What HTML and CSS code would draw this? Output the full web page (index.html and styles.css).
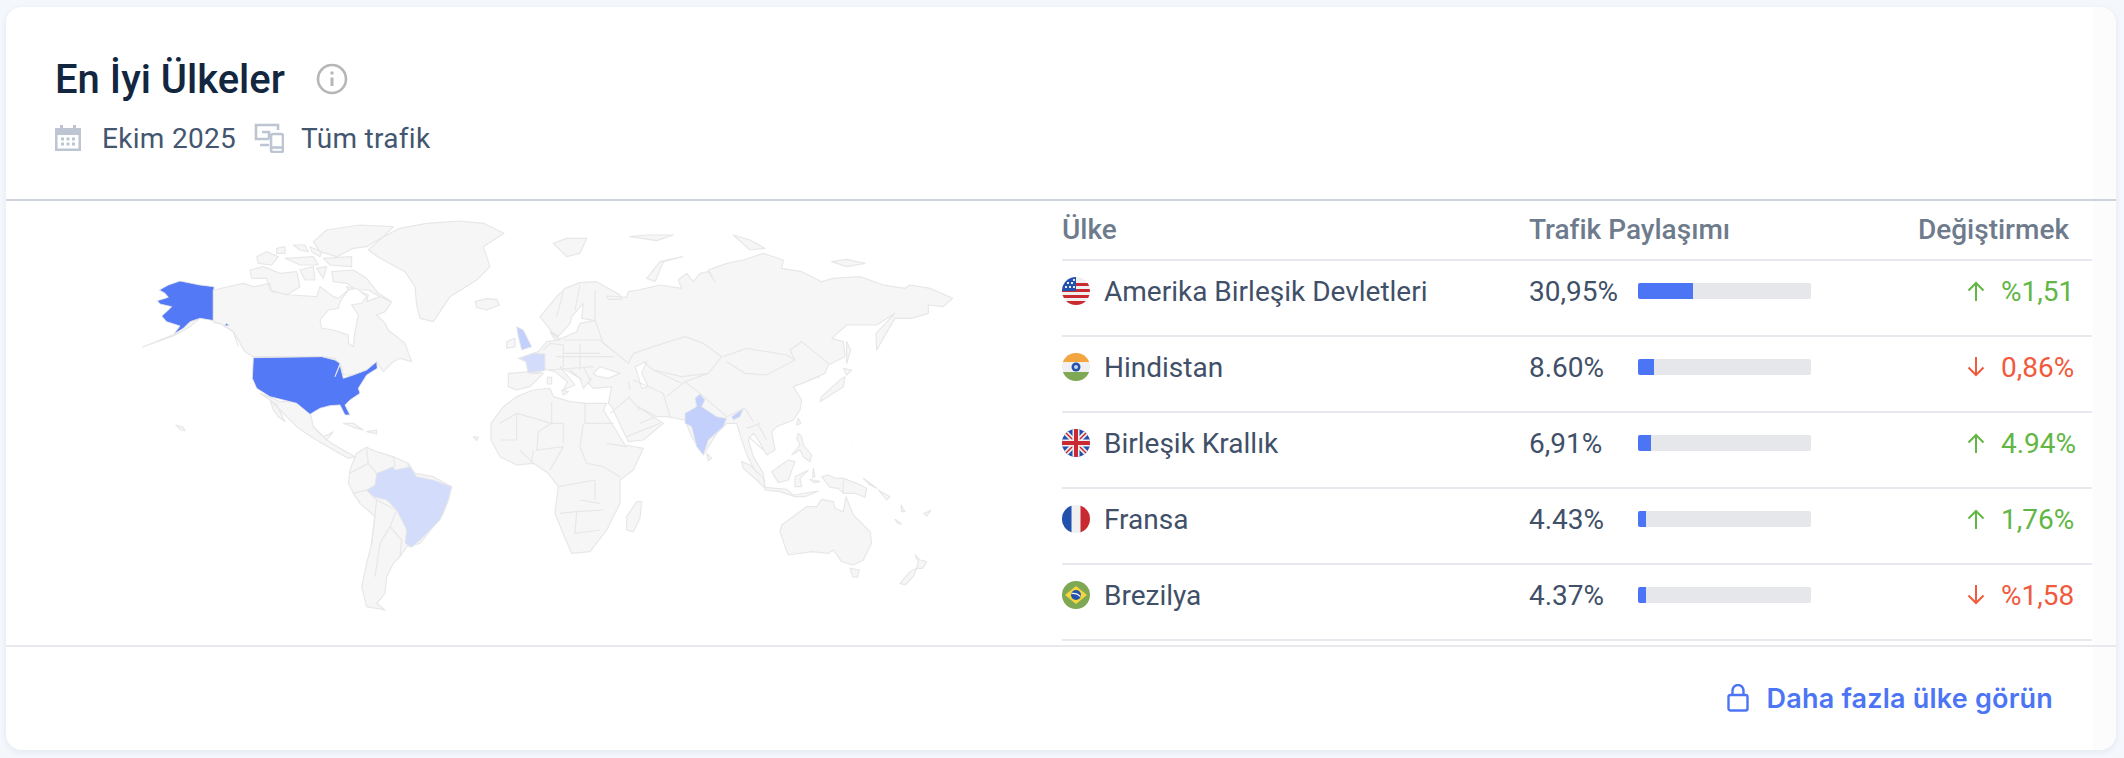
FILE: index.html
```html
<!DOCTYPE html>
<html lang="tr">
<head>
    <meta charset="UTF-8">
    <meta name="viewport" content="width=device-width, initial-scale=1.0">
    <title>En İyi Ülkeler</title>
    <link rel="stylesheet" href="styles.css">
</head>
<body>
    <div class="card">
        <div class="card-head">
            <div class="title-row">
                <h1>En İyi Ülkeler</h1>
                <svg class="info-icon" viewBox="0 0 32 32" fill="none" stroke="#b6b6b6" stroke-width="2.6">
                    <circle cx="16" cy="16" r="14"/>
                    <path d="M16 14.500V23" stroke-width="3"/>
                    <circle cx="16" cy="10" r="1.700" fill="#b6b6b6" stroke="none"/>
                </svg>
            </div>
            <div class="meta-row">
                <svg class="meta-icon" viewBox="0 0 26 26" fill="#bcc5d1">
                    <path d="M0 3h5V0h3v3h10V0h3v3h5v23H0zM2.500 10v13.500h21V10z" fill-rule="evenodd"/>
                    <path d="M6 12.500h3v3H6zM11.500 12.500h3v3h-3zM17 12.500h3v3h-3zM6 17.500h3v3H6zM11.500 17.500h3v3h-3zM17 17.500h3v3h-3z"/>
                </svg>
                <span class="meta-text">Ekim 2025</span>
                <svg class="meta-icon device" viewBox="0 0 30 30" fill="none" stroke="#bcc5d1" stroke-width="2.6">
                    <path d="M24 7V2H2v14h13M6 22h9M8 9h7v7"/>
                    <rect x="17" y="11" width="12" height="18" rx="2"/>
                    <path d="M17 24.500h12"/>
                </svg>
                <span class="meta-text">Tüm trafik</span>
            </div>
        </div>

        <div class="card-body">
            <div class="map-col">
                <svg class="world" viewBox="6 201 1056 444">
                    <!-- Alaska side, Latin America, Iceland -->
                    <g transform="translate(100 210) scale(.33333)">
                        <path class="land" d="M1125 275L1160 266 1190 268 1198 285 1160 300 1130 292Z
                            M480 550L540 575 590 575 630 605 640 650 670 680 700 665 680 690 720 715 765 740 745 745 700 720 640 685 590 650 510 570Z
                            M510 570L530 585 555 635 535 620 520 600Z
                            M730 640L760 640 790 660 760 652Z M800 665L830 660 830 672Z
                            M128 411L225 372 270 335 300 325 270 350 220 378Z
                            M228 645L250 652 255 662 240 658Z
                            M1120 680L1135 682 1130 692Z
                            M750 780L770 730 800 712 830 725 880 740 925 760 945 790 1000 800 1055 830 1045 870 1030 910 1000 950 960 1000 920 1010 900 1040 880 1060 860 1100 855 1150 830 1180 855 1200 800 1190 785 1130 800 1060 815 1000 825 920 780 880 760 850 745 820Z"/>
                        <path class="line" d="M800 715L805 760 750 790M830 790L805 760M760 850L800 840 830 870 815 1000M830 870L890 900 870 950 905 990 900 1040M870 950L840 1000 825 1100M640 650L680 690M880 740L885 770M925 760L925 780"/>
                        <path class="top" d="M800 840L825 825 830 790 880 770 885 780 930 770 950 800 1000 810 1055 830 1045 870 1020 930 960 990 935 1012 915 1000 920 960 890 900 860 870 820 860Z" fill="#d3dcfb"/>
                        <path class="top" d="M342 230L300 225 240 213 205 225 178 240 195 250 205 262 172 272 180 282 215 290 200 305 185 318 200 335 240 348 222 372 250 355 270 335 300 325 342 332Z" fill="#5479f7"/>
                    </g>
                    <!-- Canada, Greenland, USA -->
                    <g transform="translate(220 215) scale(.33333)">
                        <path class="land" d="M-20 225L70 205 100 215 150 205 155 230 215 240 290 245 300 215 340 245 355 250 385 225 380 215 410 225 445 240 440 260 480 245 515 260 495 290 470 300 495 325 505 345 555 385 575 440 540 430 520 440 490 470 470 440 440 465 400 480 370 480 365 455 345 430 305 425 100 425 75 410 40 350 0 325-20 320Z
                            M110 125L140 110 175 125 155 150 115 145Z
                            M170 100L195 95 195 115 170 115Z
                            M220 90L255 90 265 110 240 105Z
                            M270 95L305 110 300 125 275 110Z
                            M90 165L130 155 180 175 230 170 240 215 200 240 150 225 140 190 95 190Z
                            M195 130L280 125 295 150 240 150Z
                            M240 165L280 155 285 195 255 195Z
                            M290 160L320 155 310 190Z
                            M335 170L400 165 440 190 475 235 515 260 480 245 445 225 410 225 380 205 340 200Z
                            M310 130L395 125 395 155 330 150Z
                            M280 80L320 45 420 30 520 35 490 65 440 95 400 100 350 125 300 110Z
                            M445 105L490 65 540 40 620 25 720 18 790 25 852 55 790 95 810 155 770 195 690 245 640 320 600 310 590 270 585 215 555 170 480 130Z"/>
                        <path class="hole" d="M300 315L325 285 355 280 360 260 385 225 410 220 440 245 425 265 395 270 415 300 405 350 400 395 385 385 385 360 340 345 305 340Z"/>
                        <path class="line" d="M-20 322L0 325 40 350 55 395"/>
                        <path class="top" d="M100 428L305 425 345 435 360 445 345 485 360 450 370 490 400 480 440 465 470 440 472 460 440 480 415 520 420 535 390 555 375 570 390 600 375 600 360 570 330 572 300 580 270 598 230 565 170 550 150 545 110 520 97 490Z M12 332L28 332 20 325Z" fill="#5479f7"/>
                    </g>
                    <!-- Europe, Africa, Asia -->
                    <g transform="translate(500 210) scale(.33333)">
                        <path class="land" d="M-27 640L10 590 50 560 100 540 150 535 160 560 210 575 260 580 320 580 310 600 375 705 430 715 400 780 360 810 360 880 320 960 270 1025 215 1030 185 960 165 910 175 830 145 790 100 760 50 765 0 740-27 690Z
                            M25 490L100 485 130 490 90 530 50 540 25 530Z
                            M20 395L45 385 45 410 20 415Z
                            M55 445L115 425 140 395 180 390 150 365 165 390 185 385 230 365 240 340 285 332 245 325 250 280 215 320 210 340 175 380 155 365 120 320 175 255 195 235 240 218 290 215 360 255 365 268 325 268 320 258 380 262 385 245 415 240 480 225 545 235 535 210 560 190 580 215 600 190 625 185 645 215 625 180 680 160 730 150 790 130 850 150 845 175 905 185 965 215 1000 205 1080 200 1150 225 1215 235 1230 225 1290 235 1358 265 1330 290 1285 285 1285 310 1235 325 1185 325 1170 350 1130 420 1128 370 1185 310 1130 345 1100 345 1040 345 995 385 1030 395 1035 440 985 465 975 490 920 515 880 530 905 570 900 600 880 630 830 650 815 665 825 720 800 735 775 690 760 670 745 690 760 740 790 790 795 830 775 800 745 745 725 690 710 640 680 640 650 670 610 735 575 680 555 630 500 620 470 620 415 590 465 625 490 640 430 690 385 695 335 590 325 580 335 530 280 535 265 520 275 505 250 535 240 505 180 470 225 525 190 540 202 515 165 485 130 475 115 490 100 490 85 488 78 455Z
                            M142 502L155 502 155 522 142 522Z M185 540L205 545 190 555Z
                            M160 100L200 85 260 85 240 130 200 140Z
                            M390 80L440 75 520 75 470 92Z
                            M700 75L750 90 795 115 750 120Z
                            M995 155L1040 148 1095 160 1040 170Z
                            M440 205L480 155 548 140 490 155 465 215Z
                            M960 575L1030 530 1035 500 1025 505 965 560Z
                            M1030 475L1055 480 1040 495Z
                            M1040 395L1052 420 1040 460Z
                            M410 875L425 875 420 925 400 965 380 960 380 920Z"/>
                        <path class="hole" d="M280 490L300 470 360 490 325 505 290 498Z M405 470L440 455 425 490 445 530 425 535 415 500Z"/>
                        <path class="line" d="M50 610L0 640M50 610L155 640M155 575L155 640 190 640 190 700M255 580L255 640 340 640M250 640L240 710M0 690L50 690 50 610M115 665L155 640M115 665L110 720 190 710M190 710L150 780M240 710L260 760 310 770M320 700L380 710M310 770L360 800M175 830L285 810M180 910L230 905 310 900M230 905L225 970 300 960M285 810L285 870M240 870L300 880M60 720L100 760M100 720L95 755
                            M130 420L150 400 190 405 190 470M190 430L300 430M190 390L300 390M240 400L240 480M300 390L355 435M145 480L280 470M170 440L340 440M190 245L170 320M240 225L225 300M285 240L285 330 310 400 355 435 385 460 400 430M210 480L245 510M250 470L270 510
                            M385 515L390 540M400 510L490 550 510 620M400 430L490 400 555 380 610 400 665 440 625 490 545 500 460 480 430 455M670 440L740 415 860 435 885 450 800 495 735 490 680 455M625 490L555 515 600 550 680 620 735 595 760 635M885 450L870 420 905 395 960 440 985 460M460 480L545 520M500 560L555 515M330 610L390 560M420 640L465 620M380 680L480 640M385 560L420 600M925 510L960 500"/>
                        <path class="top" d="M600 552L615 570 605 590 650 620 680 625 670 650 625 690 610 735 590 710 575 650 555 640 555 610 590 590 585 565Z M695 620L730 595 720 620 700 630Z M50 350L70 360 95 410 65 420 55 380Z" fill="#c3d0fc"/>
                        <path class="top" d="M60 445L100 430 135 432 135 482 85 488 78 455Z" fill="#d3dcfb"/>
                    </g>
                    <!-- Southeast Asia, Oceania -->
                    <g transform="translate(700 400) scale(.33333)">
                        <path class="land" d="M125 185L150 195 190 235 195 265 170 240 130 205Z
                            M215 215L265 180 285 185 265 240 235 248Z
                            M285 230L325 210 300 235 305 260 285 260Z
                            M195 262L260 268 280 285 355 273 315 290 285 290 240 275 195 270Z
                            M295 100L305 110 310 135 335 165 330 185 310 170 300 150 275 165 300 135 290 115Z
                            M295 55L303 70 290 75Z
                            M20 160L35 175 25 182Z
                            M365 230L385 225 405 235 430 235 470 250 500 265 495 292 465 280 430 280 415 265 390 262Z
                            M340 205L345 230 338 232Z M330 238L360 245 340 248Z
                            M490 235L530 265 510 255Z
                            M535 270L570 290 560 300Z
                            M603 315L615 335 605 335Z
                            M585 358L605 372 595 372Z
                            M672 340L692 332 680 348Z
                            M245 375L320 320 350 320 365 298 400 305 405 325 430 335 438 290 460 345 510 395 515 430 490 480 460 495 425 485 400 450 385 460 335 455 265 465 255 440 240 395Z
                            M450 505L478 510 472 532 458 530Z
                            M645 465L660 480 680 485 668 505 650 505 655 485Z
                            M600 550L630 515 650 505 640 530 615 555Z"/>
                        <path class="line" d="M430 240L430 280M140 85L180 70M175 75L200 120M145 110L190 150"/>
                        <path class="dots" d="M460 120h1M455 132h1M385 172h1M545 176h1M630 174h1M603 225h1M685 278h1M275 120h1M262 150h1"/>
                    </g>
                </svg>
            </div>

            <div class="table">
                <div class="row head-row">
                    <span>Ülke</span>
                    <span>Trafik Paylaşımı</span>
                    <span>Değiştirmek</span>
                </div>

                <div class="row">
                    <div class="country">
                        <svg class="flag" viewBox="0 0 28 28">
                            <rect width="28" height="28" fill="#f0f0f0"/>
                            <path d="M0 12h28v3H0zM0 18h28v3H0zM0 24h28v4H0zM14 6h14v3H14z" fill="#c92a32"/>
                            <rect width="14" height="14" fill="#2351ae"/>
                            <path d="M3 9h2v2H3zM7 9h2v2H7zM11 9h2v2h-2zM5 5h2v2H5zM9 5h2v2H9zM11 2h2v2h-2z" fill="#e8ecf8"/>
                        </svg>
                        <span>Amerika Birleşik Devletleri</span>
                    </div>
                    <div class="share">
                        <span class="pct">30,95%</span>
                        <div class="bar"><div class="bar-fill" style="width: 55px"></div></div>
                    </div>
                    <div class="change up">
                        <svg class="arrow" viewBox="0 0 18 20" fill="none" stroke="currentColor" stroke-width="2"><path d="M9 20V2M1.500 9.500L9 2l7.500 7.500"/></svg>
                        <span>%1,51</span>
                    </div>
                </div>

                <div class="row">
                    <div class="country">
                        <svg class="flag" viewBox="0 0 28 28">
                            <rect width="28" height="28" fill="#f0f0f0"/>
                            <rect width="28" height="9" fill="#f3a540"/>
                            <rect y="19" width="28" height="9" fill="#7fa854"/>
                            <circle cx="14" cy="14" r="4.500" fill="#2351ae"/>
                            <circle cx="14" cy="14" r="2" fill="#c9d4ee"/>
                        </svg>
                        <span>Hindistan</span>
                    </div>
                    <div class="share">
                        <span class="pct">8.60%</span>
                        <div class="bar"><div class="bar-fill" style="width: 16px"></div></div>
                    </div>
                    <div class="change down">
                        <svg class="arrow" viewBox="0 0 18 20" fill="none" stroke="currentColor" stroke-width="2"><path d="M9 0v18M1.500 10.500L9 18l7.500-7.500"/></svg>
                        <span>0,86%</span>
                    </div>
                </div>

                <div class="row">
                    <div class="country">
                        <svg class="flag" viewBox="0 0 28 28">
                            <rect width="28" height="28" fill="#2351ae"/>
                            <path d="M0 0L28 28M28 0L0 28" stroke="#f0f0f0" stroke-width="5"/>
                            <path d="M0 0L28 28M28 0L0 28" stroke="#c92a32" stroke-width="1.500"/>
                            <path d="M14 0v28M0 14h28" stroke="#f0f0f0" stroke-width="7"/>
                            <path d="M14 0v28M0 14h28" stroke="#c92a32" stroke-width="4"/>
                        </svg>
                        <span>Birleşik Krallık</span>
                    </div>
                    <div class="share">
                        <span class="pct">6,91%</span>
                        <div class="bar"><div class="bar-fill" style="width: 13px"></div></div>
                    </div>
                    <div class="change up">
                        <svg class="arrow" viewBox="0 0 18 20" fill="none" stroke="currentColor" stroke-width="2"><path d="M9 20V2M1.500 9.500L9 2l7.500 7.500"/></svg>
                        <span>4.94%</span>
                    </div>
                </div>

                <div class="row">
                    <div class="country">
                        <svg class="flag" viewBox="0 0 28 28">
                            <rect width="28" height="28" fill="#f0f0f0"/>
                            <rect width="9.500" height="28" fill="#2351ae"/>
                            <rect x="18.500" width="9.500" height="28" fill="#c92a32"/>
                        </svg>
                        <span>Fransa</span>
                    </div>
                    <div class="share">
                        <span class="pct">4.43%</span>
                        <div class="bar"><div class="bar-fill" style="width: 8px"></div></div>
                    </div>
                    <div class="change up">
                        <svg class="arrow" viewBox="0 0 18 20" fill="none" stroke="currentColor" stroke-width="2"><path d="M9 20V2M1.500 9.500L9 2l7.500 7.500"/></svg>
                        <span>1,76%</span>
                    </div>
                </div>

                <div class="row">
                    <div class="country">
                        <svg class="flag" viewBox="0 0 28 28">
                            <rect width="28" height="28" fill="#7fa854"/>
                            <path d="M14 5L25 14 14 23 3 14z" fill="#f5d63d"/>
                            <circle cx="14" cy="14" r="5" fill="#2351ae"/>
                            <path d="M9.500 12.500q5-1 9 3" stroke="#f0f0f0" stroke-width="1.300" fill="none"/>
                        </svg>
                        <span>Brezilya</span>
                    </div>
                    <div class="share">
                        <span class="pct">4.37%</span>
                        <div class="bar"><div class="bar-fill" style="width: 8px"></div></div>
                    </div>
                    <div class="change down">
                        <svg class="arrow" viewBox="0 0 18 20" fill="none" stroke="currentColor" stroke-width="2"><path d="M9 0v18M1.500 10.500L9 18l7.500-7.500"/></svg>
                        <span>%1,58</span>
                    </div>
                </div>
            </div>
        </div>

        <div class="card-foot">
            <a class="more-link" href="#">
                <svg class="lock" viewBox="0 0 22 28" fill="none" stroke="#4c75f5" stroke-width="2.400">
                    <rect x="1.500" y="11" width="19" height="15.500" rx="2"/>
                    <path d="M5.500 11V6.500a5.500 5.500 0 0 1 11 0V11"/>
                </svg>
                <span>Daha fazla ülke görün</span>
            </a>
        </div>
    </div>
</body>
</html>
```

FILE: styles.css
```css
* {
    box-sizing: border-box;
}
body {
    margin: 0;
    padding: 7px 8px 8px 6px;
    background-color: #f4f7fc;
    font-family: Roboto, sans-serif;
}
.card {
    height: 743px;
    background: linear-gradient(to right, #ffffff 2087px, #fcfcfd 2087px);
    border-radius: 16px;
    box-shadow: 0 2px 6px rgba(40, 60, 100, 0.08);
    display: flex;
    flex-direction: column;
}
.card-head {
    height: 194px;
    padding: 50px 0 0 49px;
    border-bottom: 2px solid #cdd3da;
}
.title-row {
    display: flex;
    align-items: center;
    gap: 31px;
    height: 44px;
}
h1 {
    margin: 0;
    font-size: 40px;
    font-weight: 500;
    color: #12263f;
}
.info-icon {
    width: 32px;
    height: 32px;
}
.meta-row {
    display: flex;
    align-items: center;
    margin-top: 22px;
    height: 30px;
}
.meta-icon {
    width: 26px;
    height: 26px;
    margin-right: 21px;
}
.meta-icon.device {
    width: 30px;
    height: 30px;
    margin: 0 17px 0 18px;
}
.meta-text {
    font-size: 28px;
    color: #435670;
    letter-spacing: 0.3px;
}
.card-body {
    flex: 1;
    display: flex;
}
.map-col {
    width: 1056px;
    flex: none;
}
.world {
    display: block;
    width: 1056px;
    height: 444px;
}
.land {
    fill: #f6f6f6;
    stroke: #e7e7e7;
    stroke-width: 3.5;
    stroke-linejoin: round;
}
.hole {
    fill: #ffffff;
    stroke: #e7e7e7;
    stroke-width: 3.5;
}
.line {
    fill: none;
    stroke: #e7e7e7;
    stroke-width: 3.5;
}
.dots {
    fill: none;
    stroke: #e7e7e7;
    stroke-width: 4;
}
.top {
    stroke: #e7e7e7;
    stroke-width: 2.5;
}
.table {
    width: 1030px;
}
.row {
    display: grid;
    grid-template-columns: 467px 438px 1fr;
    height: 76px;
    padding-top: 16px;
    border-bottom: 2px solid #e8e8ee;
    font-size: 28px;
    color: #3f5068;
}
.head-row {
    grid-template-columns: 467px 1fr auto;
    height: 60px;
    padding: 12px 23px 0 0;
    font-weight: 500;
    color: #6e7b8c;
}
.country {
    display: flex;
    align-items: center;
    gap: 14px;
    height: 28px;
}
.flag {
    width: 28px;
    height: 28px;
    border-radius: 50%;
    flex: none;
}
.share {
    display: flex;
    align-items: center;
    height: 28px;
}
.pct {
    width: 109px;
}
.bar {
    width: 173px;
    height: 16px;
    border-radius: 2px;
    background-color: #e6e7eb;
    overflow: hidden;
}
.bar-fill {
    height: 100%;
    background-color: #4c75f5;
}
.change {
    display: flex;
    align-items: center;
    gap: 16px;
    height: 28px;
}
.arrow {
    width: 18px;
    height: 20px;
    flex: none;
}
.up {
    color: #62b644;
}
.down {
    color: #f15a3c;
}
.card-foot {
    height: 105px;
    border-top: 2px solid #e8e8ee;
    display: flex;
    justify-content: flex-end;
    padding: 32px 63px 0 0;
}
.more-link {
    display: flex;
    align-items: center;
    gap: 18px;
    height: 38px;
    text-decoration: none;
    color: #4c75f5;
    font-family: Inter, sans-serif;
    font-size: 27px;
    font-weight: 600;
    letter-spacing: 0.2px;
}
.lock {
    width: 22px;
    height: 28px;
}
```
